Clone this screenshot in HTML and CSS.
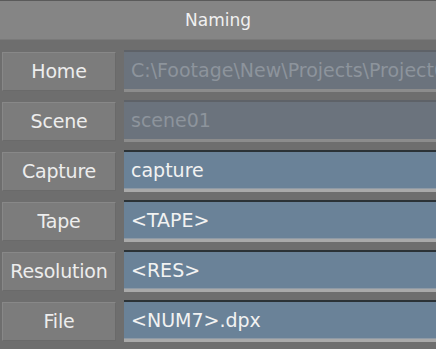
FILE: index.html
```html
<!DOCTYPE html>
<html lang="en">
<head>
    <meta charset="UTF-8">
    <title>Naming</title>
    <link rel="stylesheet" href="styles.css">
</head>
<body>

<div class="panel">
    <div class="header">Naming</div>

    <div class="rows">
        <div class="row">
            <div class="label">Home</div>
            <div class="field disabled">C:\Footage\New\Projects\Project01</div>
        </div>
        <div class="row">
            <div class="label">Scene</div>
            <div class="field disabled">scene01</div>
        </div>
        <div class="row">
            <div class="label">Capture</div>
            <div class="field">capture</div>
        </div>
        <div class="row">
            <div class="label">Tape</div>
            <div class="field">&lt;TAPE&gt;</div>
        </div>
        <div class="row">
            <div class="label">Resolution</div>
            <div class="field">&lt;RES&gt;</div>
        </div>
        <div class="row">
            <div class="label">File</div>
            <div class="field">&lt;NUM7&gt;.dpx</div>
        </div>
    </div>
</div>

</body>
</html>
```

FILE: styles.css
```css
* {
    box-sizing: border-box;
    margin: 0;
    padding: 0;
}
body {
    background: #6e6e6e;
    font-family: "DejaVu Sans", sans-serif;
    overflow: hidden;
}
.panel {
    width: 436px;
    height: 349px;
}
.header {
    height: 40px;
    background: #858585;
    border-top: 1px solid #5a5a5a;
    border-bottom: 1px solid #7a7a7a;
    color: #f0f0f0;
    font-size: 17px;
    text-align: center;
    line-height: 38px;
}
.rows {
    display: flex;
    flex-direction: column;
    gap: 8px;
    padding: 10px 0 0 2px;
}
.row {
    display: flex;
    gap: 8px;
    height: 42px;
}
.label {
    width: 114px;
    margin: 2px 0 1px;
    background: #7c7c7c;
    border: 1px solid #888;
    border-right-color: #6a6a6a;
    border-bottom-color: #6a6a6a;
    color: #ededed;
    font-size: 19px;
    letter-spacing: -0.2px;
    text-align: center;
    line-height: 37px;
    white-space: nowrap;
}
.field {
    flex: 1;
    margin-right: -10px;
    background: #6a8298;
    border-top: 2px solid #2b3236;
    border-bottom: 3px solid #a9a9a9;
    box-shadow: inset 0 -1px 0 #8e9aa6;
    color: #f2f2f2;
    font-size: 19px;
    padding-left: 7px;
    line-height: 36px;
    white-space: nowrap;
    overflow: hidden;
}
.field.disabled {
    background: #6b737d;
    border-top-color: #5e6268;
    border-bottom-color: #8c8c8c;
    box-shadow: none;
    color: #8d949c;
}
```
